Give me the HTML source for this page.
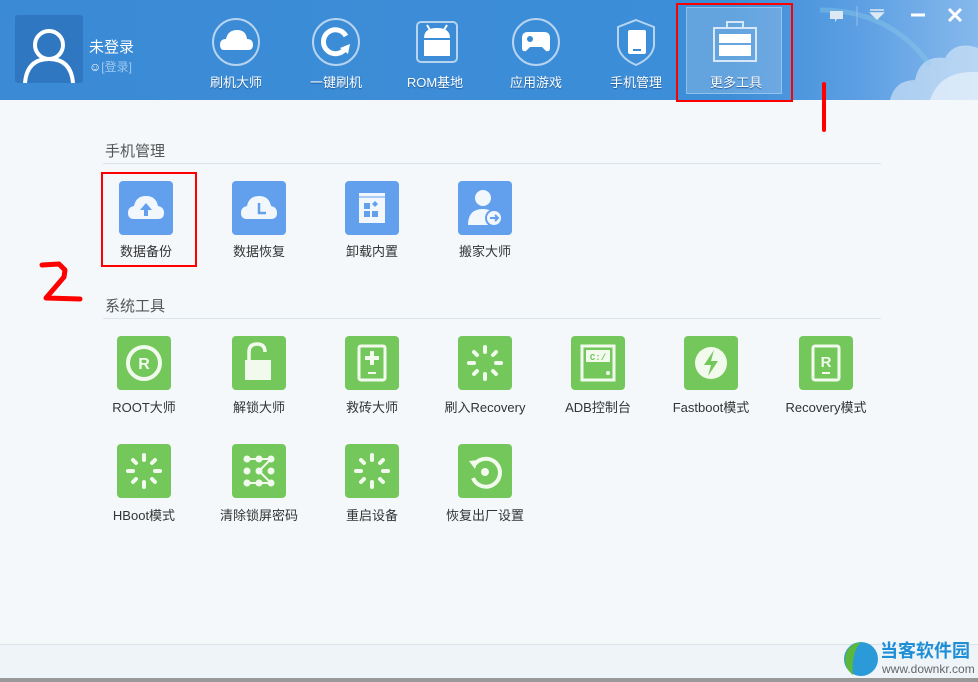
<!DOCTYPE html>
<html><head><meta charset="utf-8"><style>
*{margin:0;padding:0;box-sizing:border-box}
body{width:978px;height:682px;overflow:hidden;background:#f4f8fb;font-family:"Liberation Sans","Noto Sans CJK SC",sans-serif;position:relative}
.hdr{position:absolute;left:0;top:0;width:978px;height:100px;background:linear-gradient(90deg,#3a8ad5 0%,#3d8ed8 75%,#5d9fe3 88%,#86b9ec 100%)}
.abs{position:absolute;white-space:nowrap}
.nav{position:absolute;top:0;width:100px;height:100px;text-align:center;color:#fff;font-size:13px}
.nav svg{position:absolute;left:26px;top:18px}
.nav span{position:absolute;left:0;right:0;top:72px;text-shadow:0 1px 1px #1d5a99}
.sec{position:absolute;left:105px;font-size:15px;color:#555}
.line{position:absolute;left:103px;width:778px;height:1px;background:#dde3ea}
.tile{position:absolute;width:54px;height:54px;border-radius:4px}
.b{background:#62a0ee}.g{background:#74c75a}
.tile svg{position:absolute;left:0;top:0}
.lbl{position:absolute;width:120px;text-align:center;font-size:13px;color:#333}
</style></head><body>
<div class="hdr"></div>
<svg class="abs" style="left:780px;top:0" width="198" height="100"><path d="M110 100 Q115 80 135 80 Q140 55 165 58 Q175 40 198 48 L198 100Z" fill="#e3eefa" opacity=".55"/><path d="M150 100 Q160 70 198 72 L198 100Z" fill="#f0f6fc" opacity=".6"/><path d="M40 10 Q110 10 150 65" stroke="#8fd0e8" stroke-width="5" fill="none" opacity=".35"/></svg>
<div class="abs" style="left:15px;top:15px;width:68px;height:68px;background:#2f77c0;border-radius:3px"></div>
<svg class="abs" style="left:15px;top:15px" width="68" height="68"><circle cx="34" cy="30" r="14" fill="none" stroke="#fff" stroke-width="4"/><path d="M10 68 Q12 44 34 44 Q56 44 58 68" fill="none" stroke="#fff" stroke-width="4"/></svg>
<div class="abs" style="left:89px;top:36px;color:#fff;font-size:15px">未登录</div>
<div class="abs" style="left:89px;top:58px;color:#9fc8f0;font-size:12px"><span style="color:#fff">&#9786;</span>[登录]</div>

<div class="nav" style="left:186px"><svg width="48" height="48"><circle cx="24" cy="24" r="23" fill="none" stroke="#b6d4f0" stroke-width="2"/><path d="M12 32 Q8 32 8 27 Q8 21 14 21 Q16 12 25 12 Q34 12 35 21 Q41 21 41 27 Q41 32 36 32Z" fill="#fff"/></svg><span>刷机大师</span></div>
<div class="nav" style="left:286px"><svg width="48" height="48"><circle cx="24" cy="24" r="23" fill="none" stroke="#b6d4f0" stroke-width="2"/><path d="M33 31 A12 12 0 1 1 34 18" fill="none" stroke="#fff" stroke-width="5"/><path d="M38 26 L28 30 L36 36Z" fill="#fff"/></svg><span>一键刷机</span></div>
<div class="nav" style="left:385px"><svg width="48" height="48"><rect x="6" y="4" width="40" height="40" rx="4" fill="none" stroke="#b6d4f0" stroke-width="2"/><path d="M13 20 Q13 10 26 10 Q39 10 39 20Z M13 22 H39 V38 H13Z" fill="#fff"/><path d="M16 7 L19 12 M36 7 L33 12" stroke="#fff" stroke-width="2"/></svg><span>ROM基地</span></div>
<div class="nav" style="left:486px"><svg width="48" height="48"><circle cx="24" cy="24" r="23" fill="none" stroke="#b6d4f0" stroke-width="2"/><path d="M10 20 Q10 14 16 14 H32 Q38 14 38 20 V30 Q38 34 34 33 L30 29 H18 L14 33 Q10 34 10 30Z" fill="#fff"/><circle cx="18" cy="21" r="3" fill="#3a8ad5"/></svg><span>应用游戏</span></div>
<div class="nav" style="left:586px"><svg width="48" height="48"><path d="M24 2 L42 9 V28 Q40 40 24 47 Q8 40 6 28 V9Z" fill="none" stroke="#b6d4f0" stroke-width="2"/><rect x="16" y="12" width="18" height="24" rx="2" fill="#fff"/><rect x="21" y="31" width="8" height="2" fill="#3a8ad5"/></svg><span>手机管理</span></div>
<div class="abs" style="left:686px;top:7px;width:96px;height:87px;background:rgba(255,255,255,.2);border:1px solid rgba(255,255,255,.3)"></div>
<div class="nav" style="left:686px"><svg width="48" height="48"><rect x="2" y="10" width="42" height="33" fill="none" stroke="#d6e7f7" stroke-width="2"/><rect x="15" y="4" width="16" height="6" fill="none" stroke="#d6e7f7" stroke-width="2"/><rect x="7" y="16" width="32" height="22" fill="#fff"/><path d="M7 26 H39" stroke="#6aa5e0" stroke-width="2"/></svg><span>更多工具</span></div>
<div class="abs" style="left:676px;top:3px;width:117px;height:99px;border:2px solid #f00"></div>
<div class="abs" style="left:822px;top:82px;width:4px;height:50px;background:#f00;border-radius:2px"></div>
<svg class="abs" style="left:825px;top:4px" width="150" height="24"><path d="M5 7 H18 V15 H12 L10 18 V15 H5Z" fill="#dce8f4"/><path d="M32 2 V22" stroke="#9bbde0"/><path d="M45 6 H59 M46 9 H58 L52 15Z" stroke="#dce8f4" fill="#dce8f4" stroke-width="1.5"/><path d="M86 11 H100" stroke="#fff" stroke-width="3"/><path d="M124 5 L136 17 M136 5 L124 17" stroke="#fff" stroke-width="3"/></svg>

<div class="sec" style="top:140px">手机管理</div><div class="line" style="top:163px"></div>
<div class="sec" style="top:295px">系统工具</div><div class="line" style="top:318px"></div>

<div class="tile b" style="left:119px;top:181px"><svg width="54" height="54"><path d="M15 38 Q9 38 9 32 Q9 26 15 25 Q17 15 27 15 Q37 15 39 25 Q45 26 45 32 Q45 38 39 38Z" fill="#f2f7fd"/><path d="M27 22 L33 29 H29 V35 H25 V29 H21Z" fill="#62a0ee"/></svg></div>
<div class="lbl" style="left:86px;top:241px">数据备份</div>
<div class="tile b" style="left:232px;top:181px"><svg width="54" height="54"><path d="M15 38 Q9 38 9 32 Q9 26 15 25 Q17 15 27 15 Q37 15 39 25 Q45 26 45 32 Q45 38 39 38Z" fill="#f2f7fd"/><path d="M27 22 V32 H34" fill="none" stroke="#62a0ee" stroke-width="2.5"/></svg></div>
<div class="lbl" style="left:199px;top:241px">数据恢复</div>
<div class="tile b" style="left:345px;top:181px"><svg width="54" height="54"><rect x="14" y="12" width="26" height="30" fill="#f2f7fd"/><rect x="19" y="22" width="6" height="6" fill="#62a0ee"/><rect x="19" y="30" width="6" height="6" fill="#62a0ee"/><rect x="27" y="30" width="6" height="6" fill="#62a0ee"/><path d="M30 20 L33 23 L30 26 L27 23Z" fill="#62a0ee"/><path d="M14 16 H40" stroke="#62a0ee"/></svg></div>
<div class="lbl" style="left:312px;top:241px">卸载内置</div>
<div class="tile b" style="left:458px;top:181px"><svg width="54" height="54"><circle cx="25" cy="17" r="8" fill="#f2f7fd"/><path d="M10 44 Q10 28 25 28 Q32 28 36 32 L30 44Z" fill="#f2f7fd"/><circle cx="36" cy="37" r="8" fill="#f2f7fd" stroke="#62a0ee" stroke-width="2"/><path d="M32 37 H39 M37 34 L40 37 L37 40" stroke="#62a0ee" stroke-width="2" fill="none"/></svg></div>
<div class="lbl" style="left:425px;top:241px">搬家大师</div>
<div class="abs" style="left:101px;top:172px;width:96px;height:95px;border:2px solid #f00"></div>
<svg class="abs" style="left:25px;top:255px" width="65" height="60"><path d="M17 10 L34 9 L40 15 L39 22 L21 43 L55 44" fill="none" stroke="#f00" stroke-width="5" stroke-linejoin="round" stroke-linecap="round"/></svg>

<div class="tile g" style="left:117px;top:336px"><svg width="54" height="54"><circle cx="27" cy="27" r="16" fill="none" stroke="#f2faee" stroke-width="4"/><text x="27" y="33" font-size="16" font-weight="bold" fill="#f2faee" text-anchor="middle" font-family="Liberation Sans">R</text></svg></div>
<div class="lbl" style="left:84px;top:397px">ROOT大师</div>
<div class="tile g" style="left:232px;top:336px"><svg width="54" height="54"><path d="M17 24 V16 Q17 8 25 8 Q33 8 33 16" fill="none" stroke="#f2faee" stroke-width="3.5"/><rect x="13" y="24" width="26" height="20" fill="#f2faee"/></svg></div>
<div class="lbl" style="left:199px;top:397px">解锁大师</div>
<div class="tile g" style="left:345px;top:336px"><svg width="54" height="54"><rect x="14" y="10" width="26" height="34" rx="2" fill="none" stroke="#f2faee" stroke-width="3"/><path d="M27 15 V29 M20 22 H34" stroke="#f2faee" stroke-width="4"/><path d="M23 37 H31" stroke="#f2faee" stroke-width="2"/></svg></div>
<div class="lbl" style="left:312px;top:397px">救砖大师</div>
<svg width="0" height="0" style="position:absolute"><defs><g id="sp" stroke="#f2faee" stroke-width="4" stroke-linecap="round"><path d="M27 11 V16 M27 38 V43 M11 27 H16 M38 27 H43 M16 16 L19 19 M35 35 L38 38 M38 16 L35 19 M16 38 L19 35"/></g></defs></svg>
<div class="tile g" style="left:458px;top:336px"><svg width="54" height="54"><use href="#sp"/></svg></div>
<div class="lbl" style="left:425px;top:397px">刷入Recovery</div>
<div class="tile g" style="left:571px;top:336px"><svg width="54" height="54"><rect x="11" y="10" width="32" height="34" fill="none" stroke="#f2faee" stroke-width="3"/><rect x="15" y="14" width="24" height="12" fill="#f2faee"/><text x="27" y="24" font-size="9" font-weight="bold" fill="#74c75a" text-anchor="middle" font-family="Liberation Mono">C:/</text><circle cx="37" cy="37" r="2" fill="#f2faee"/></svg></div>
<div class="lbl" style="left:538px;top:397px">ADB控制台</div>
<div class="tile g" style="left:684px;top:336px"><svg width="54" height="54"><circle cx="27" cy="27" r="16" fill="#f2faee"/><path d="M30 14 L20 29 H27 L24 40 L34 25 H27Z" fill="#74c75a"/></svg></div>
<div class="lbl" style="left:651px;top:397px">Fastboot模式</div>
<div class="tile g" style="left:799px;top:336px"><svg width="54" height="54"><rect x="14" y="10" width="26" height="34" rx="2" fill="none" stroke="#f2faee" stroke-width="3"/><text x="27" y="31" font-size="15" font-weight="bold" fill="#f2faee" text-anchor="middle" font-family="Liberation Sans">R</text><path d="M23 37 H31" stroke="#f2faee" stroke-width="2"/></svg></div>
<div class="lbl" style="left:766px;top:397px">Recovery模式</div>

<div class="tile g" style="left:117px;top:444px"><svg width="54" height="54"><use href="#sp"/></svg></div>
<div class="lbl" style="left:84px;top:505px">HBoot模式</div>
<div class="tile g" style="left:232px;top:444px"><svg width="54" height="54"><g fill="#f2faee"><circle cx="15" cy="15" r="3.5"/><circle cx="27" cy="15" r="3.5"/><circle cx="39" cy="15" r="3.5"/><circle cx="15" cy="27" r="3.5"/><circle cx="27" cy="27" r="3.5"/><circle cx="39" cy="27" r="3.5"/><circle cx="15" cy="39" r="3.5"/><circle cx="27" cy="39" r="3.5"/><circle cx="39" cy="39" r="3.5"/></g><path d="M15 15 H39 L27 27 L39 39 H15" stroke="#f2faee" stroke-width="2" fill="none"/></svg></div>
<div class="lbl" style="left:199px;top:505px">清除锁屏密码</div>
<div class="tile g" style="left:345px;top:444px"><svg width="54" height="54"><use href="#sp"/></svg></div>
<div class="lbl" style="left:312px;top:505px">重启设备</div>
<div class="tile g" style="left:458px;top:444px"><svg width="54" height="54"><path d="M17 20 A14 14 0 1 1 15 34" fill="none" stroke="#f2faee" stroke-width="4"/><path d="M11 17 L20 16 L17 25Z" fill="#f2faee"/><circle cx="27" cy="28" r="4" fill="#f2faee"/></svg></div>
<div class="lbl" style="left:425px;top:505px">恢复出厂设置</div>

<div class="abs" style="left:0;top:644px;width:978px;height:1px;background:#dde3ea"></div>
<div class="abs" style="left:0;top:645px;width:978px;height:33px;background:#eff4f9"></div>
<div class="abs" style="left:0;top:678px;width:978px;height:4px;background:#999"></div>
<svg class="abs" style="left:842px;top:638px" width="38" height="42"><circle cx="19" cy="21" r="17" fill="#2a9bd8"/><path d="M3 20 Q5 6 19 4 Q9 14 11 37 Q3 31 3 20Z" fill="#5bb83a"/></svg>
<div class="abs" style="left:880px;top:640px;font-size:18px;font-weight:bold;color:#1e8fd6;line-height:22px">当客软件园</div>
<div class="abs" style="left:882px;top:662px;font-size:12px;color:#666;line-height:14px">www.downkr.com</div>
</body></html>
